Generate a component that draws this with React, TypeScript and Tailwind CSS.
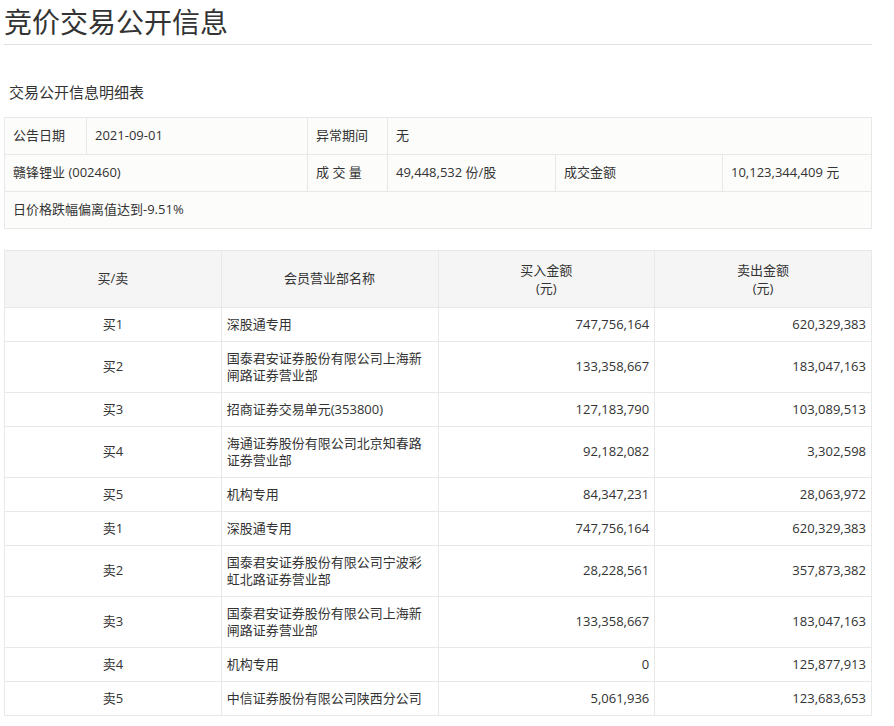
const rows: [string, string, string, string][] = [
  ["买1", "深股通专用", "747,756,164", "620,329,383"],
  ["买2", "国泰君安证券股份有限公司上海新闸路证券营业部", "133,358,667", "183,047,163"],
  ["买3", "招商证券交易单元(353800)", "127,183,790", "103,089,513"],
  ["买4", "海通证券股份有限公司北京知春路证券营业部", "92,182,082", "3,302,598"],
  ["买5", "机构专用", "84,347,231", "28,063,972"],
  ["卖1", "深股通专用", "747,756,164", "620,329,383"],
  ["卖2", "国泰君安证券股份有限公司宁波彩虹北路证券营业部", "28,228,561", "357,873,382"],
  ["卖3", "国泰君安证券股份有限公司上海新闸路证券营业部", "133,358,667", "183,047,163"],
  ["卖4", "机构专用", "0", "125,877,913"],
  ["卖5", "中信证券股份有限公司陕西分公司", "5,061,936", "123,683,653"],
]

const cell = "border border-[#e8e8e8] px-2 text-[13px] text-[#333]"

export default function App() {
  return (
    <div className="bg-white text-[#333] pl-[4px] pr-[22px]" style={{ fontFamily: '"Open Sans", "Noto Sans CJK SC", sans-serif' }}>
      <h1 className="text-[28px] leading-[44px] h-[45px] border-b border-[#e0e0e0] text-[#333]">竞价交易公开信息</h1>
      <h2 className="text-[15px] mt-[32px] ml-[5px] leading-[30px]">交易公开信息明细表</h2>
      <table className="mt-[10px] w-full border-collapse bg-[#fcfcfa]">
        <tbody>
          <tr className="h-[37px]">
            <td className={`${cell} w-[82px]`}>公告日期</td>
            <td className={`${cell} w-[221px]`}>2021-09-01</td>
            <td className={`${cell} w-[80px]`}>异常期间</td>
            <td className={cell} colSpan={3}>无</td>
          </tr>
          <tr className="h-[37px]">
            <td className={cell} colSpan={2}>赣锋锂业 (002460)</td>
            <td className={cell}>成 交 量</td>
            <td className={`${cell} w-[168px]`}>49,448,532 份/股</td>
            <td className={`${cell} w-[167px]`}>成交金额</td>
            <td className={cell}>10,123,344,409 元</td>
          </tr>
          <tr className="h-[37px]">
            <td className={cell} colSpan={6}>日价格跌幅偏离值达到-9.51%</td>
          </tr>
        </tbody>
      </table>
      <table className="mt-[21px] w-full border-collapse table-fixed">
        <thead>
          <tr className="h-[57px] bg-[#f5f5f5]">
            <th className={`${cell} font-normal`}>买/卖</th>
            <th className={`${cell} font-normal`}>会员营业部名称</th>
            <th className={`${cell} font-normal leading-[18px]`}>买入金额<br />(元)</th>
            <th className={`${cell} font-normal leading-[18px]`}>卖出金额<br />(元)</th>
          </tr>
        </thead>
        <tbody>
          {rows.map((r, i) => {
            const tall = r[1].length > 18
            return (
              <tr key={i} className={tall ? "h-[51px]" : "h-[34px]"}>
                <td className={`${cell} text-[12px] text-center`}>{r[0]}</td>
                <td className={`${cell} text-[12px] leading-[17px] px-[5px]`}>{r[1]}</td>
                <td className={`${cell} text-[12px] text-right px-[5px]`}>{r[2]}</td>
                <td className={`${cell} text-[12px] text-right px-[5px]`}>{r[3]}</td>
              </tr>
            )
          })}
        </tbody>
      </table>
    </div>
  )
}
